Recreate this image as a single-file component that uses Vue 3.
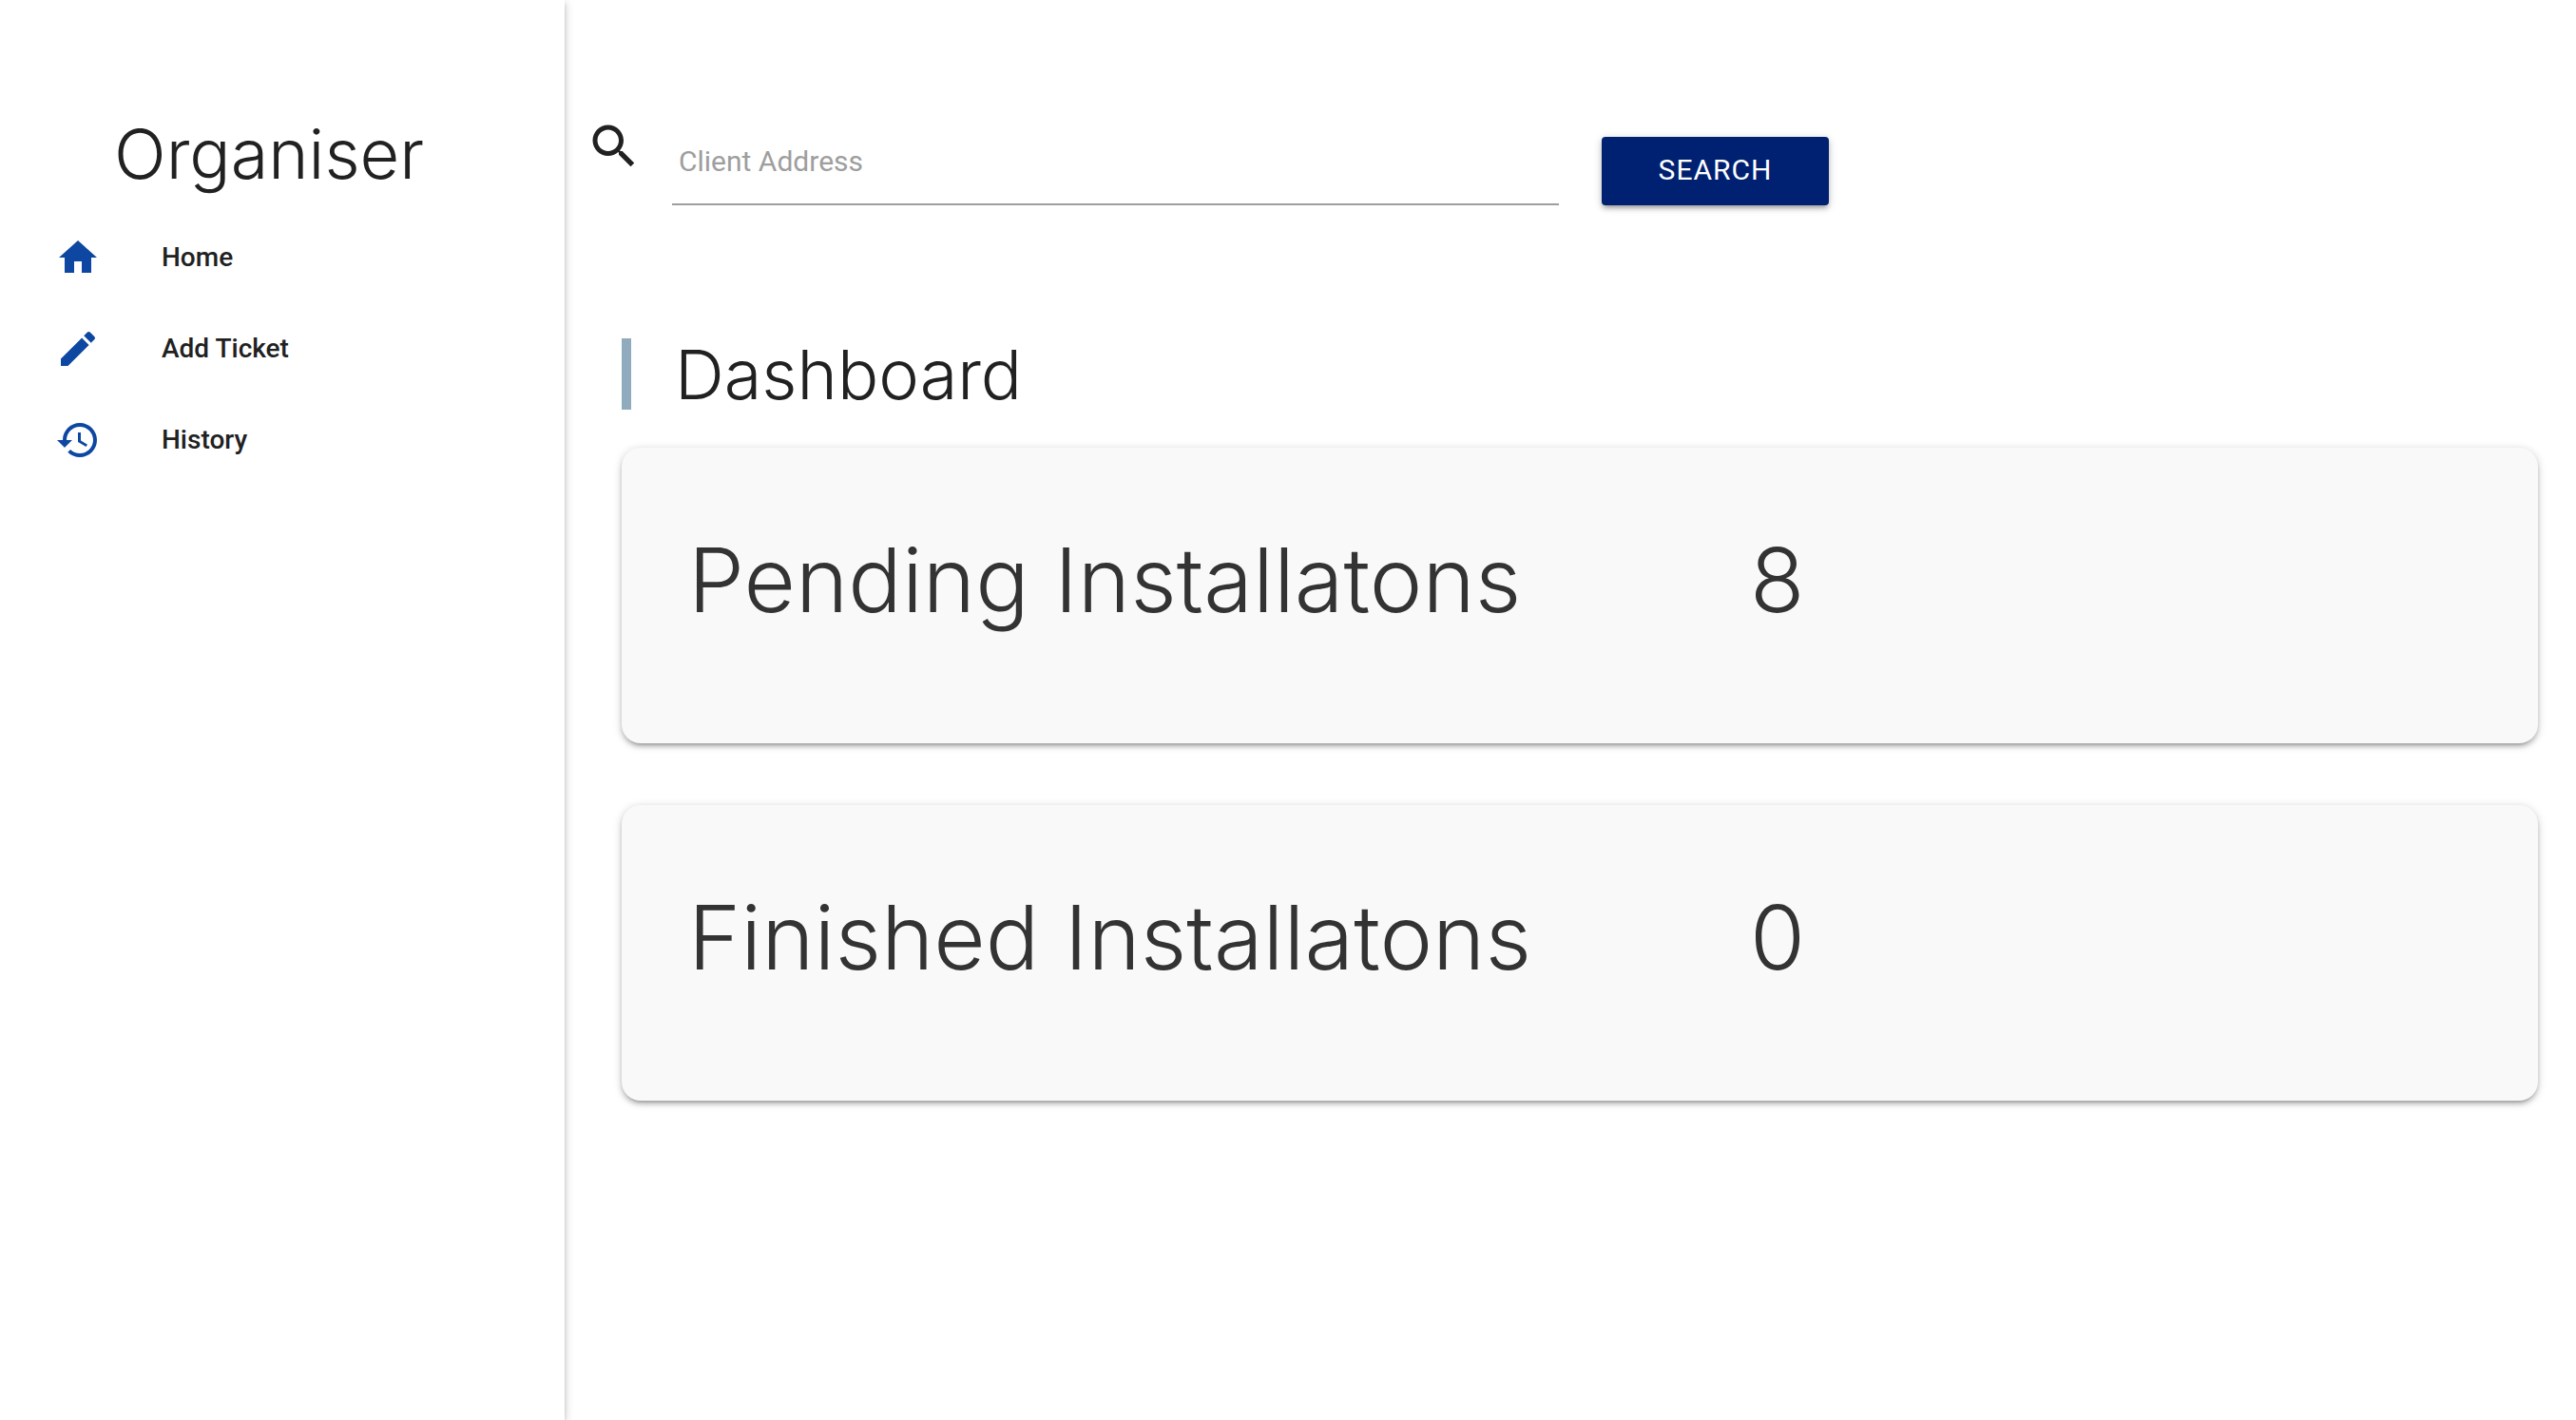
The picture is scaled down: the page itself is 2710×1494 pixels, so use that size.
<script setup>
import { ref } from 'vue'

const address = ref('')

const links = [
  { label: 'Home', path: 'M10 20v-6h4v6h5v-8h3L12 3 2 12h3v8z' },
  {
    label: 'Add Ticket',
    path: 'M3 17.25V21h3.75L17.81 9.94l-3.75-3.75L3 17.25zM20.71 7.04c.39-.39.39-1.02 0-1.41l-2.34-2.34c-.39-.39-1.02-.39-1.41 0l-1.83 1.83 3.75 3.75 1.83-1.83z',
  },
  {
    label: 'History',
    path: 'M13 3c-4.97 0-9 4.03-9 9H1l3.89 3.89.07.14L9 12H6c0-3.87 3.13-7 7-7s7 3.13 7 7-3.13 7-7 7c-1.93 0-3.68-.79-4.94-2.06l-1.42 1.42C8.27 19.99 10.51 21 13 21c4.97 0 9-4.03 9-9s-4.03-9-9-9zm-1 5v5l4.28 2.54.72-1.21-3.5-2.08V8H12z',
  },
]

const stats = [
  { label: 'Pending Installatons', count: 8 },
  { label: 'Finished Installatons', count: 0 },
]
</script>

<template>
  <div class="layout">
    <aside class="sidebar">
      <h1 class="brand">Organiser</h1>
      <nav>
        <a v-for="link in links" :key="link.label" class="nav-link" href="#">
          <svg class="nav-icon" viewBox="0 0 24 24" aria-hidden="true"><path :d="link.path" /></svg>
          <span class="nav-text">{{ link.label }}</span>
        </a>
      </nav>
    </aside>

    <main class="content">
      <form class="search" @submit.prevent>
        <label class="search-label" for="address" aria-label="Client Address">
          <svg class="search-icon" viewBox="0 0 24 24" aria-hidden="true">
            <path d="M15.5 14h-.79l-.28-.27C15.41 12.59 16 11.11 16 9.5 16 5.91 13.09 3 9.5 3S3 5.91 3 9.5 5.91 16 9.5 16c1.61 0 3.09-.59 4.23-1.57l.27.28v.79l5 4.99L20.49 19l-4.99-5zm-6 0C7.01 14 5 11.99 5 9.5S7.01 5 9.5 5 14 7.01 14 9.5 11.99 14 9.5 14z" />
          </svg>
        </label>
        <input id="address" v-model="address" class="search-input" type="text" placeholder="Client Address" />
        <button class="search-button" type="submit">SEARCH</button>
      </form>

      <section class="dashboard">
        <h2 class="heading">Dashboard</h2>
        <article v-for="stat in stats" :key="stat.label" class="card">
          <span>{{ stat.label }}</span>
          <span>{{ stat.count }}</span>
        </article>
      </section>
    </main>
  </div>
</template>

<style>
body {
  margin: 0;
  background: #fff;
}
</style>

<style scoped>
.layout {
  display: grid;
  grid-template-columns: 594px 1fr;
  min-height: 100vh;
  color: #212121;
  font-family: Roboto, sans-serif;
}

.sidebar {
  background: #fff;
  box-shadow: 0 4px 4px rgba(0, 0, 0, 0.14), 0 6px 2px -4px rgba(0, 0, 0, 0.12), 0 2px 10px rgba(0, 0, 0, 0.2);
}

.brand {
  margin: 122px 0 21px 120px;
  font: 300 72px/80px Inter, sans-serif;
}

.nav-link {
  display: flex;
  align-items: center;
  gap: 64px;
  height: 96px;
  padding-left: 58px;
  color: #212121;
  font-size: 28px;
  font-weight: 500;
  text-decoration: none;
}

.nav-icon {
  width: 48px;
  height: 48px;
  fill: #0d47a1;
}

.nav-text {
  padding-bottom: 2px;
}

.content {
  padding: 124px 40px 60px 22px;
}

.search {
  display: flex;
  align-items: flex-start;
}

.search-label {
  width: 60px;
  height: 60px;
  margin-right: 31px;
}

.search-icon {
  display: block;
  width: 60px;
  height: 60px;
  fill: #212121;
}

.search-input {
  box-sizing: border-box;
  flex: 0 1 933px;
  height: 92px;
  padding: 0 7px;
  border: 0;
  border-bottom: 2px solid #9e9e9e;
  background: transparent;
  color: #212121;
  font: 400 30px Roboto, sans-serif;
  outline: 0;
}

.search-input::placeholder {
  color: #9e9e9e;
  opacity: 1;
}

.search-button {
  width: 239px;
  height: 72px;
  margin: 20px 0 0 45px;
  padding: 0 0 3px;
  border: 0;
  border-radius: 4px;
  background: #002171;
  box-shadow: 0 4px 4px rgba(0, 0, 0, 0.14), 0 6px 2px -4px rgba(0, 0, 0, 0.12), 0 2px 10px rgba(0, 0, 0, 0.2);
  color: #fff;
  font: 400 30px Roboto, sans-serif;
  letter-spacing: 1px;
}

.dashboard {
  margin: 140px 0 0 38px;
}

.heading {
  margin: 0 0 40px;
  padding-left: 46px;
  border-left: 10px solid #90abbd;
  font: 300 72px/75px Inter, sans-serif;
}

.card {
  box-sizing: border-box;
  display: grid;
  grid-template-columns: 1117px 1fr;
  height: 311px;
  margin-bottom: 65px;
  padding: 87px 70px;
  border-radius: 20px;
  background: #f9f9f9;
  box-shadow: 0 4px 4px rgba(0, 0, 0, 0.14), 0 6px 2px -4px rgba(0, 0, 0, 0.12), 0 2px 10px rgba(0, 0, 0, 0.2);
  color: #333;
  font: 300 94px/104px Inter, sans-serif;
}
</style>
